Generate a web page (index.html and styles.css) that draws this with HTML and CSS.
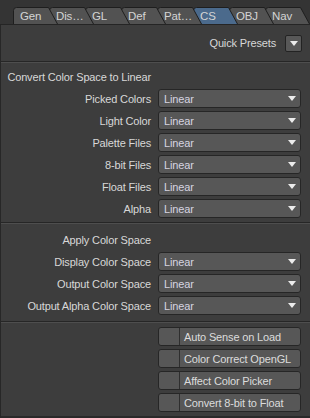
FILE: index.html
```html
<!DOCTYPE html>
<html>
<head>
<meta charset="utf-8">
<link rel="stylesheet" href="styles.css">
</head>
<body>
<div class="window">
  <div class="tabbar">
    <div class="tab"><svg class="tab-shape" viewBox="0 0 45 17" width="45" height="17"><path d="M0.5 17 V3.5 Q0.5 0.5 3.5 0.5 H35.5 L44.5 17"/></svg><span class="tab-label">Gen</span></div>
    <div class="tab"><svg class="tab-shape" viewBox="0 0 45 17" width="45" height="17"><path d="M0.5 17 V3.5 Q0.5 0.5 3.5 0.5 H35.5 L44.5 17"/></svg><span class="tab-label">Dis…</span></div>
    <div class="tab"><svg class="tab-shape" viewBox="0 0 45 17" width="45" height="17"><path d="M0.5 17 V3.5 Q0.5 0.5 3.5 0.5 H35.5 L44.5 17"/></svg><span class="tab-label">GL</span></div>
    <div class="tab"><svg class="tab-shape" viewBox="0 0 45 17" width="45" height="17"><path d="M0.5 17 V3.5 Q0.5 0.5 3.5 0.5 H35.5 L44.5 17"/></svg><span class="tab-label">Def</span></div>
    <div class="tab"><svg class="tab-shape" viewBox="0 0 45 17" width="45" height="17"><path d="M0.5 17 V3.5 Q0.5 0.5 3.5 0.5 H35.5 L44.5 17"/></svg><span class="tab-label">Pat…</span></div>
    <div class="tab active"><svg class="tab-shape" viewBox="0 0 45 17" width="45" height="17"><path d="M0.5 17 V3.5 Q0.5 0.5 3.5 0.5 H35.5 L44.5 17"/></svg><span class="tab-label">CS</span></div>
    <div class="tab"><svg class="tab-shape" viewBox="0 0 45 17" width="45" height="17"><path d="M0.5 17 V3.5 Q0.5 0.5 3.5 0.5 H35.5 L44.5 17"/></svg><span class="tab-label">OBJ</span></div>
    <div class="tab"><svg class="tab-shape" viewBox="0 0 45 17" width="45" height="17"><path d="M0.5 17 V3.5 Q0.5 0.5 3.5 0.5 H35.5 L44.5 17"/></svg><span class="tab-label">Nav</span></div>
  </div>
  <div class="panel">
    <div class="presets-row">
      <span class="label">Quick Presets</span>
      <div class="mini-btn"><span class="tri"></span></div>
    </div>
    <div class="section first">
      <div class="row"><div class="label">Convert Color Space to Linear</div></div>
      <div class="row"><div class="label">Picked Colors</div><div class="select"><span>Linear</span><span class="tri"></span></div></div>
      <div class="row"><div class="label">Light Color</div><div class="select"><span>Linear</span><span class="tri"></span></div></div>
      <div class="row"><div class="label">Palette Files</div><div class="select"><span>Linear</span><span class="tri"></span></div></div>
      <div class="row"><div class="label">8-bit Files</div><div class="select"><span>Linear</span><span class="tri"></span></div></div>
      <div class="row"><div class="label">Float Files</div><div class="select"><span>Linear</span><span class="tri"></span></div></div>
      <div class="row"><div class="label">Alpha</div><div class="select"><span>Linear</span><span class="tri"></span></div></div>
    </div>
    <div class="section second">
      <div class="row"><div class="label">Apply Color Space</div></div>
      <div class="row"><div class="label">Display Color Space</div><div class="select"><span>Linear</span><span class="tri"></span></div></div>
      <div class="row"><div class="label">Output Color Space</div><div class="select"><span>Linear</span><span class="tri"></span></div></div>
      <div class="row"><div class="label">Output Alpha Color Space</div><div class="select"><span>Linear</span><span class="tri"></span></div></div>
    </div>
    <div class="section third">
      <div class="row"><div></div><div class="check"><span class="box"></span><span class="check-text">Auto Sense on Load</span></div></div>
      <div class="row"><div></div><div class="check"><span class="box"></span><span class="check-text">Color Correct OpenGL</span></div></div>
      <div class="row"><div></div><div class="check"><span class="box"></span><span class="check-text">Affect Color Picker</span></div></div>
      <div class="row"><div></div><div class="check"><span class="box"></span><span class="check-text">Convert 8-bit to Float</span></div></div>
    </div>
  </div>
</div>
</body>
</html>
```

FILE: styles.css
```css
* { box-sizing: border-box; }
html, body {
  margin: 0;
  padding: 0;
  background: #353535;
}
body {
  width: 310px;
  height: 418px;
  overflow: hidden;
  font-family: "Liberation Sans", Arial, sans-serif;
  font-size: 11px;
  letter-spacing: -0.15px;
  color: #d8d8d8;
}
.window {
  display: flex;
  flex-direction: column;
  height: 418px;
}
.tabbar {
  display: flex;
  align-items: flex-end;
  height: 25px;
  padding-left: 13px;
  background: #343434;
  border-bottom: 1px solid #252525;
}
.tab {
  position: relative;
  width: 45px;
  height: 17px;
  margin-right: -9px;
  flex: none;
}
.tab:nth-child(1) { z-index: 8; }
.tab:nth-child(2) { z-index: 7; }
.tab:nth-child(3) { z-index: 6; }
.tab:nth-child(4) { z-index: 5; }
.tab:nth-child(5) { z-index: 4; }
.tab:nth-child(6) { z-index: 3; }
.tab:nth-child(7) { z-index: 2; }
.tab:nth-child(8) { z-index: 1; }
.tab-shape {
  position: absolute;
  left: 0;
  top: 0;
  display: block;
}
.tab-shape path {
  fill: #525252;
  stroke: #1e1e1e;
  stroke-width: 1;
}
.tab.active .tab-shape path {
  fill: #4b6a8c;
}
.tab-label {
  position: relative;
  display: block;
  padding-left: 7px;
  line-height: 18px;
  font-size: 11.5px;
  color: #d4d4d4;
  white-space: nowrap;
}
.panel {
  flex: 1;
  background: #3d3d3d;
  border-left: 1px solid #272727;
  border-bottom: 2px solid #2a2a2a;
}
.presets-row {
  display: flex;
  justify-content: flex-end;
  align-items: center;
  gap: 9px;
  height: 36px;
  padding-right: 8px;
}
.mini-btn {
  width: 17px;
  height: 17px;
  background: #585858;
  border: 1px solid #232323;
  border-radius: 2px;
  display: flex;
  align-items: center;
  justify-content: center;
}
.tri {
  width: 0;
  height: 0;
  border-left: 4.5px solid transparent;
  border-right: 4.5px solid transparent;
  border-top: 5px solid #ececec;
}
.section {
  border-top: 1px solid #262626;
  box-shadow: inset 0 1px 0 #4e4e4e;
  display: flex;
  flex-direction: column;
  gap: 3px;
}
.section.first { padding: 5px 0 4px; }
.section.second { padding: 7px 0 6px; }
.section.third { padding: 5px 0 0; }
.row {
  display: grid;
  grid-template-columns: 150px 143px;
  column-gap: 7px;
  height: 19px;
  align-items: center;
}
.label {
  text-align: right;
  white-space: nowrap;
}
.select {
  height: 19px;
  background: #575757;
  border: 1px solid #262626;
  border-radius: 3px;
  display: flex;
  align-items: center;
  justify-content: space-between;
  padding: 0 4px 0 5px;
  color: #d6d4e0;
}
.check {
  height: 19px;
  background: #575757;
  border: 1px solid #262626;
  border-radius: 3px;
  display: flex;
  align-items: stretch;
}
.box {
  width: 21px;
  border-right: 1px solid #2e2e2e;
  flex: none;
}
.check-text {
  display: flex;
  align-items: center;
  padding-left: 4px;
  color: #dcdcdc;
  white-space: nowrap;
}
```
